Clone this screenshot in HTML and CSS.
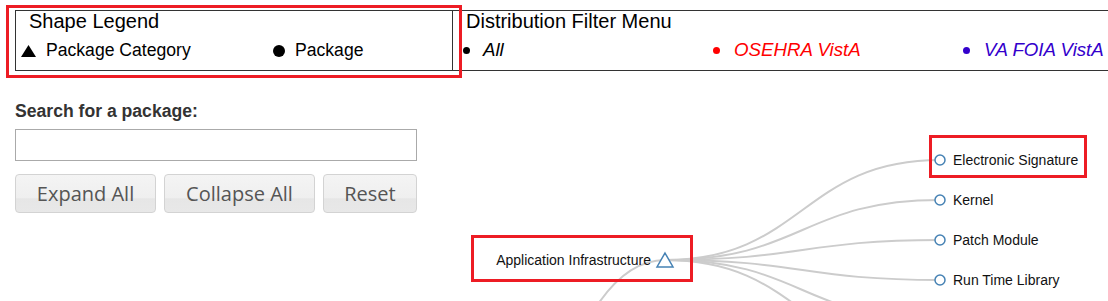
FILE: index.html
```html
<!DOCTYPE html>
<html lang="en">
<head>
<meta charset="UTF-8" />
<title>VistA Package Categories</title>
<link rel="stylesheet" href="styles.css">
</head>
<body>

<div class="top-panel">
  <div class="legend">
    <div class="panel-title legend-title">Shape Legend</div>
    <div class="panel-row">
      <span class="legend-item category">
        <svg class="shape" width="15" height="12" viewBox="0 0 15 12"><path d="M7.5 0 L15 12 L0 12 Z" /></svg>
        Package Category
      </span>
      <span class="legend-item">
        <svg class="shape" width="12" height="12" viewBox="0 0 12 12"><circle cx="6" cy="6" r="6" /></svg>
        Package
      </span>
    </div>
  </div>
  <div class="filter-menu">
    <div class="panel-title filter-title">Distribution Filter Menu</div>
    <ul class="panel-row filter-list">
      <li class="filter-item all"><span class="dot"></span>All</li>
      <li class="filter-item osehra"><span class="dot"></span>OSEHRA VistA</li>
      <li class="filter-item foia"><span class="dot"></span>VA FOIA VistA</li>
    </ul>
  </div>
</div>

<div class="main">
  <div class="search-panel">
    <label class="search-label" for="autocomplete">Search for a package:</label>
    <input type="text" class="search-input" id="autocomplete" />
    <div class="button-row">
      <button class="ui-button">Expand All</button>
      <button class="ui-button">Collapse All</button>
      <button class="ui-button">Reset</button>
    </div>
  </div>

  <!-- tree, in page coordinates -->
  <svg class="tree" width="691" height="230" viewBox="417 71 691 230">
    <g class="links">
      <path d="M390,700 C527.5,700 527.5,260 665,260" />
      <path d="M665,260 C802.5,260 802.5,160 940,160" />
      <path d="M665,260 C802.5,260 802.5,200 940,200" />
      <path d="M665,260 C802.5,260 802.5,240 940,240" />
      <path d="M665,260 C802.5,260 802.5,280 940,280" />
      <path d="M665,260 C802.5,260 802.5,320 940,320" />
      <path d="M665,260 C802.5,260 802.5,360 940,360" />
    </g>
    <g class="node category">
      <path d="M665,253 L673,267 L657,267 Z" />
      <text x="651" y="265" text-anchor="end">Application Infrastructure</text>
    </g>
    <g class="node">
      <circle cx="940" cy="160" r="5" />
      <text x="953" y="165">Electronic Signature</text>
    </g>
    <g class="node">
      <circle cx="940" cy="200" r="5" />
      <text x="953" y="205">Kernel</text>
    </g>
    <g class="node">
      <circle cx="940" cy="240" r="5" />
      <text x="953" y="245">Patch Module</text>
    </g>
    <g class="node">
      <circle cx="940" cy="280" r="5" />
      <text x="953" y="285">Run Time Library</text>
    </g>
    <rect class="mark" x="472.5" y="236.5" width="219" height="44" />
    <rect class="mark" x="930.5" y="136.5" width="155" height="40" />
  </svg>
</div>

</body>
</html>
```

FILE: styles.css
```css
html, body {
  margin: 0;
  padding: 0;
  background: #fff;
  overflow: hidden;
  font-family: "Liberation Sans", Arial, sans-serif;
  color: #000;
}

.top-panel {
  display: flex;
  margin: 10px 0 0 15px;
}

.legend {
  position: relative;
  box-sizing: border-box;
  width: 438px;
  border: 1px solid #333;
  padding: 0 0 10px 5px;
}

/* red marker drawn round the legend */
.legend::after {
  content: "";
  position: absolute;
  left: -10px;
  top: -6px;
  right: -10px;
  bottom: -8px;
  border: 3px solid #ed1c24;
  pointer-events: none;
}

.panel-title {
  font-size: 20px;
  line-height: 20px;
  height: 20px;
}
.legend-title { padding-left: 8px; }

.panel-row {
  display: flex;
  align-items: center;
  margin: 9px 0 0;
  padding: 0;
  height: 20px;
  font-size: 17.6px;
  line-height: 20px;
  white-space: nowrap;
}

.legend-item {
  display: flex;
  align-items: center;
  gap: 10px;
}
.legend-item.category { width: 252px; }
.shape { display: block; margin-top: 2px; fill: #000; }

.filter-menu {
  flex: 1;
  min-width: 0;
  border-top: 1px solid #333;
  border-bottom: 1px solid #333;
  padding: 0 0 10px 10px;
}
.filter-title { padding-left: 3px; }

.filter-list { list-style: none; font-size: 18.7px; }
.filter-item {
  display: flex;
  align-items: center;
  gap: 14px;
  width: 250px;
  font-style: italic;
}
.filter-item.all { gap: 13px; }
.filter-item:last-child { width: auto; }
.dot {
  width: 7px;
  height: 7px;
  border-radius: 50%;
  background: currentColor;
}
.filter-item.all { color: #000; }
.filter-item.osehra { color: #ff0000; }
.filter-item.foia { color: #3300cc; }

.main {
  display: flex;
  align-items: flex-start;
}

.search-panel {
  width: 402px;
  margin-left: 15px;
  padding-top: 30px;
}

.search-label {
  display: block;
  font-weight: bold;
  font-size: 17.6px;
  line-height: 20px;
  color: #333;
  margin-bottom: 8px;
}

.search-input {
  display: block;
  box-sizing: border-box;
  width: 402px;
  height: 32px;
  margin: 0 0 13px;
  border: 1px solid #aaa;
  outline: none;
}

.button-row {
  display: flex;
  gap: 8px;
}

.ui-button {
  height: 39px;
  padding: 0 20px;
  font-family: "Open Sans", sans-serif;
  font-size: 20px;
  color: #555;
  border: 1px solid #d3d3d3;
  border-radius: 4px;
  background: linear-gradient(#f4f4f4 0%, #efefef 62%, #e6e6e6 64%, #e8e8e8 100%);
  cursor: pointer;
}
.ui-button:nth-child(1) { width: 141px; }
.ui-button:nth-child(2) { width: 151px; }
.ui-button:nth-child(3) { width: 94px; }

.tree {
  display: block;
  font-family: "Liberation Sans", Arial, sans-serif;
  font-size: 14px;
}
.links path {
  fill: none;
  stroke: #ccc;
  stroke-width: 2px;
}
.node circle,
.node path {
  fill: #fff;
  stroke: steelblue;
  stroke-width: 1.5px;
}
.node text { fill: #111; }
.mark {
  fill: none;
  stroke: #ed1c24;
  stroke-width: 3px;
}
```
